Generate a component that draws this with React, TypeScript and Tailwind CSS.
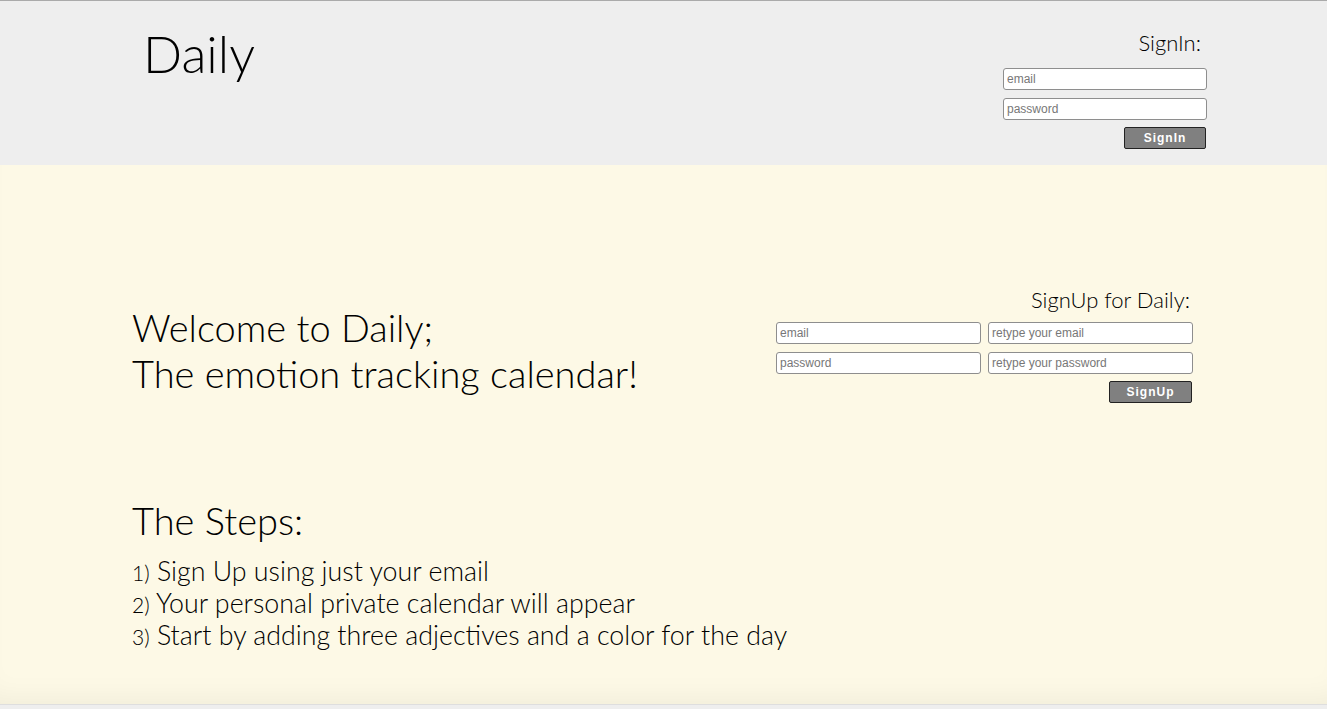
import React from 'react';

const lato = { fontFamily: 'Lato, "Open Sans", sans-serif' };

const Field: React.FC<{ placeholder: string; type?: string; className?: string }> = ({
  placeholder,
  type = 'text',
  className = '',
}) => (
  <input
    type={type}
    placeholder={placeholder}
    className={`h-[22px] bg-white border border-[#8e8e8e] rounded-[3px] px-[3px] text-[12px] text-[#333] placeholder:text-[#777] font-['Liberation_Sans',Arial,sans-serif] outline-none ${className}`}
  />
);

const GrayButton: React.FC<{ label: string; className?: string }> = ({ label, className = '' }) => (
  <button
    className={`h-[22px] bg-[#808080] border border-[#222] rounded-[2px] text-white text-[12px] font-bold tracking-[1px] font-['Liberation_Sans',Arial,sans-serif] ${className}`}
  >
    {label}
  </button>
);

const steps = [
  'Sign Up using just your email',
  'Your personal private calendar will appear',
  'Start by adding three adjectives and a color for the day',
];

export default function App() {
  return (
    <div className="w-full h-[709px] bg-[#eeeeee] flex flex-col font-light text-black" style={lato}>
      {/* header */}
      <header className="h-[165px] border-t border-[#aaaaaa] bg-[#eeeeee] flex justify-between pl-[143px] pr-[120px]">
        <h1 className="mt-[21px] text-[51.5px] font-light leading-[62px]">Daily</h1>
        <div className="mt-[29px] w-[204px] flex flex-col items-end">
          <div className="text-[22px] leading-[26px] pr-[6px]">SignIn:</div>
          <Field placeholder="email" className="w-[204px] mt-[12px]" />
          <Field placeholder="password" type="password" className="w-[204px] mt-[8px]" />
          <GrayButton label="SignIn" className="w-[82px] mt-[7px] mr-[1px]" />
        </div>
      </header>

      {/* main */}
      <main className="h-[540px] bg-[#fdf9e6] border-b border-[#dedede] pl-[132px] pr-[134px] pt-[122px] shadow-[inset_0_-24px_30px_-20px_rgba(0,0,0,0.06)]">
        <div className="flex justify-between items-start">
          <div className="mt-[17px] text-[38px] leading-[46px]">
            <div>Welcome to Daily;</div>
            <div>The emotion tracking calendar!</div>
          </div>
          <div className="w-[417px] flex flex-col items-end">
            <div className="text-[22px] leading-[26px] pr-[3px]">SignUp for Daily:</div>
            <div className="mt-[9px] flex gap-[7px]">
              <Field placeholder="email" className="w-[205px]" />
              <Field placeholder="retype your email" className="w-[205px]" />
            </div>
            <div className="mt-[8px] flex gap-[7px]">
              <Field placeholder="password" type="password" className="w-[205px]" />
              <Field placeholder="retype your password" type="password" className="w-[205px]" />
            </div>
            <GrayButton label="SignUp" className="w-[83px] mt-[7px] mr-[1px]" />
          </div>
        </div>

        <h2 className="mt-[94px] text-[38px] leading-[46px] font-light">The Steps:</h2>
        <ol className="mt-[12px] text-[26.8px] leading-[32px]">
          {steps.map((s, i) => (
            <li key={i}>
              <span className="text-[21px] leading-none">{i + 1})</span> {s}
            </li>
          ))}
        </ol>
      </main>
    </div>
  );
}
